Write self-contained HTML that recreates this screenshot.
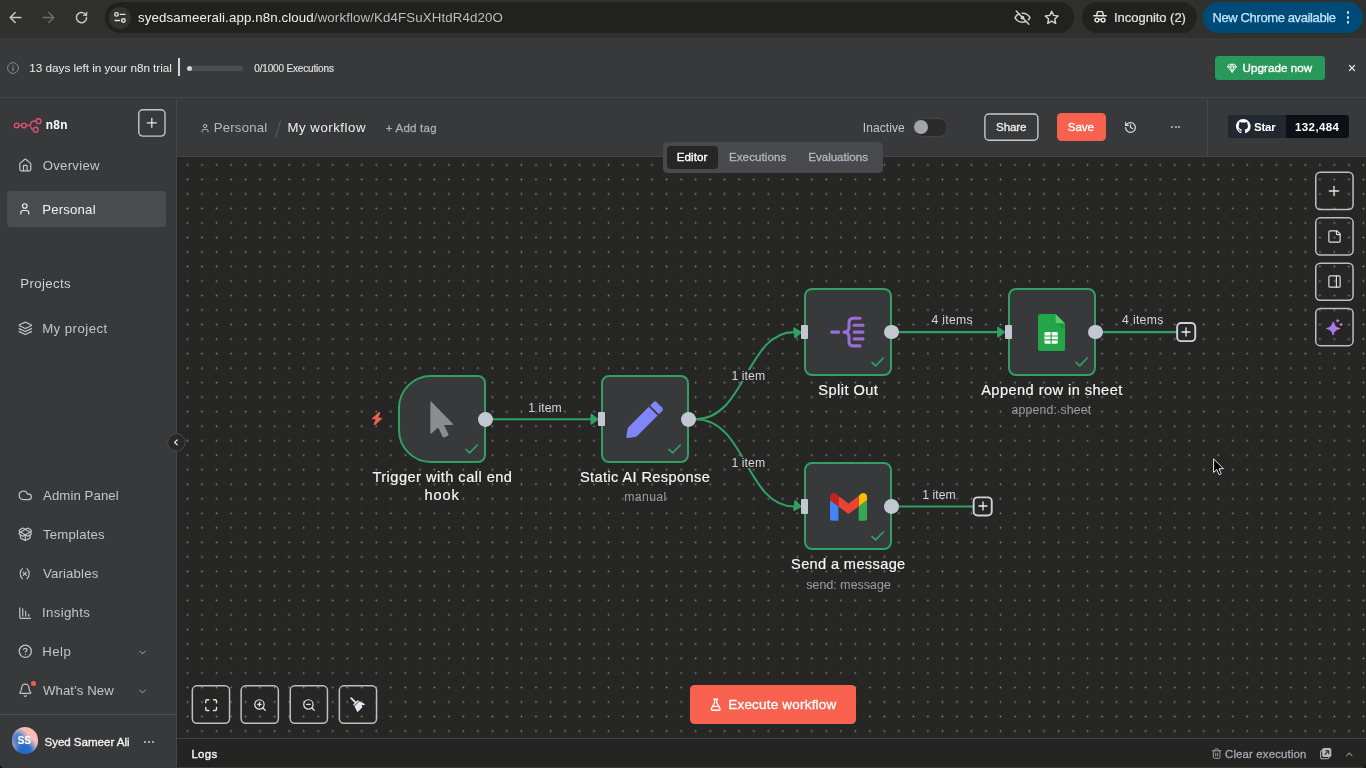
<!DOCTYPE html>
<html lang="en">
<head>
<meta charset="utf-8">
<title>n8n - My workflow</title>
<style>
*{box-sizing:border-box;margin:0;padding:0}
html,body{width:1366px;height:768px;overflow:hidden;background:#262626;font-family:"Liberation Sans",sans-serif;color:#e6e6e6}
.a{position:absolute}
.t{position:absolute;white-space:nowrap;line-height:1}
#root{position:absolute;left:0;top:0;width:1366px;height:768px;will-change:transform}
svg{position:absolute;overflow:visible}
.i{fill:none;stroke-linecap:round;stroke-linejoin:round}
.pill{position:absolute;top:2px;height:31px;border-radius:15.5px;background:#21211f}
.btn{position:absolute;border:1.6px solid #bcbec3;border-radius:4.500px}
.node{position:absolute;width:88px;height:88px;border:2px solid #31a062;border-radius:8px;background:#38393b}
.hin{position:absolute;width:7.4px;height:14.6px;border-radius:1px;background:#c3c7d2}
.hout{position:absolute;width:14.8px;height:14.8px;border-radius:50%;background:#c3c7d2}
.plus{position:absolute;width:20px;height:20px;border:2px solid #ccd0d8;border-radius:4.5px;background:#262626}
.lb{position:absolute;background:#262626}
</style>
</head>
<body>
<div id="root">
<div class="a" style="left:0;top:0;width:1366px;height:38px;background:#30302e"></div>
<svg class="i" style="left:9px;top:11px" width="13" height="13" viewBox="0 0 13 13" stroke="#c7c7c7" stroke-width="1.5"><path d="M12 6.500H1.300M6.200 1.500l-5 5 5 5"/></svg>
<svg class="i" style="left:42px;top:11px" width="13" height="13" viewBox="0 0 13 13" stroke="#6c6c6c" stroke-width="1.5"><path d="M1 6.500h10.700M6.800 1.500l5 5-5 5"/></svg>
<svg class="i" style="left:75px;top:11px" width="13" height="13" viewBox="0 0 13 13" stroke="#c7c7c7" stroke-width="1.5"><path d="M11.600 6.500a5.100 5.100 0 1 1-1.600-3.700"/><path d="M11.800 1v3.400H8.400" fill="#c7c7c7" stroke-width="1"/></svg>
<div class="pill" style="left:105px;width:969px"></div>
<div class="a" style="left:109.200px;top:7.200px;width:21.600px;height:21.600px;border-radius:50%;background:#333331"></div>
<svg class="i" style="left:0;top:0" width="200" height="38" viewBox="0 0 200 38" stroke="#e0e0e0" stroke-width="1.400"><circle cx="116.500" cy="14.400" r="1.750"/><path d="M120.400 14.400H125"/><path d="M115 20.450H119.600"/><circle cx="123.400" cy="20.450" r="1.750"/></svg>
<div class="t" style="left:138.02px;top:11px;font-size:13.3px;letter-spacing:0.106px;color:#f0f0f0">syedsameerali.app.n8n.cloud<span style="color:#bdbdbd">/workflow/Kd4FSuXHtdR4d20O</span></div>
<svg class="i" style="left:1014.400px;top:9.800px" width="17" height="15" viewBox="0 0 17 15" stroke="#cfcfcf" stroke-width="1.500"><path d="M1 7.700C2.500 4.900 5.300 3.200 8.500 3.200s6 1.700 7.500 4.500c-1.500 2.800-4.300 4.500-7.500 4.500S2.500 10.500 1 7.700z"/><path d="M3.300 0l12.500 13.300" stroke="#21211f" stroke-width="1.600"/><circle cx="8.500" cy="7.700" r="1.900" fill="#cfcfcf" stroke="none"/><path d="M2.300 1l12.500 13.300"/></svg>
<svg class="i" style="left:1044.100px;top:10.200px" width="15.400" height="15.400" viewBox="0 0 14 14" stroke="#cfcfcf" stroke-width="1.350"><path d="M7 1.200l1.750 3.700 4.050.5-3 2.800.8 4L7 10.200l-3.600 2 .8-4-3-2.800 4.050-.5z"/></svg>
<div class="pill" style="left:1082px;width:115px"></div>
<svg class="i" style="left:1093px;top:10.400px" width="14" height="13.500" viewBox="0 0 14 13.500" stroke="#e6e6e6" stroke-width="1.450"><path d="M.8 5.800h12.400"/><path d="M3.500 5.600l1.100-4h4.800l1.100 4"/><circle cx="3.900" cy="10" r="1.900"/><circle cx="10.100" cy="10" r="1.900"/><path d="M5.800 9.600c.8-.5 1.600-.5 2.400 0"/></svg>
<div class="t" style="left:1114.0px;top:11px;font-size:13px;letter-spacing:-0.026px;color:#e3e3e3;-webkit-text-stroke:0.2px #e3e3e3">Incognito (2)</div>
<div class="pill" style="left:1202.500px;width:160.500px;background:#004a77"></div>
<div class="t" style="left:1212.51px;top:11px;font-size:13px;letter-spacing:-0.384px;color:#c2e7ff;-webkit-text-stroke:0.25px #c2e7ff">New Chrome available</div>
<div class="a" style="left:1346.500px;top:11.200px;width:2.800px;height:2.800px;border-radius:50%;background:#c2e7ff;box-shadow:0 4.900px 0 #c2e7ff,0 9.800px 0 #c2e7ff"></div>
<div class="a" style="left:0;top:38px;width:1366px;height:60px;background:#38393b;border-bottom:1px solid #444648"></div>
<svg class="i" style="left:6.900px;top:61.500px" width="12" height="12" viewBox="0 0 12 12" stroke="#85878c" stroke-width="1"><circle cx="6" cy="6" r="5.400"/><path d="M6 5.600V8.600" stroke-width="1.300"/><path d="M6 3.500V3.600" stroke-width="1.400"/></svg>
<div class="t" style="left:29.35px;top:63px;font-size:11.8px;letter-spacing:-0.059px;color:#ececec">13 days left in your n8n trial</div>
<div class="a" style="left:177.800px;top:58.200px;width:2.300px;height:17.500px;background:#d6d6d6"></div>
<div class="a" style="left:186.500px;top:66.100px;width:56.600px;height:4.700px;border-radius:2.400px;background:#4d4e52"></div>
<div class="a" style="left:186.500px;top:65.900px;width:5.200px;height:5.200px;border-radius:50%;background:#cbd2e2"></div>
<div class="t" style="left:254.34px;top:64px;font-size:10px;letter-spacing:-0.17px;color:#e0e0e0;-webkit-text-stroke:0.15px #e0e0e0">0/1000 Executions</div>
<div class="a" style="left:1215px;top:56.300px;width:109.800px;height:23.700px;border-radius:3.500px;background:#29995b"></div>
<svg class="i" style="left:1227px;top:63.4px" width="10.2" height="10.2" viewBox="0 0 24 24" stroke="#fff" stroke-width="2.2" ><path d="M6 3h12l4 6-10 13L2 9Z"/><path d="M11 3 8 9l4 13 4-13-3-6"/><path d="M2 9h20"/></svg>
<div class="t" style="left:1242.61px;top:62px;font-size:11.6px;letter-spacing:0.05px;color:#fff;-webkit-text-stroke:0.35px #fff">Upgrade now</div>
<svg class="i" style="left:1346.7px;top:63.4px" width="10" height="10" viewBox="0 0 24 24" stroke="#e4e4e4" stroke-width="2.9" ><path d="M18 6 6 18"/><path d="m6 6 12 12"/></svg>
<div class="a" style="left:0;top:98px;width:177px;height:670px;background:#38393b;border-right:1px solid #444648"></div>
<svg class="i" style="left:0;top:0" width="180" height="140" viewBox="0 0 180 140" stroke="#de4f72" stroke-width="1.350"><circle cx="16.700" cy="125.400" r="2.350"/><circle cx="24" cy="125.400" r="2.350"/><path d="M19.050 125.400H21.650M26.350 125.400H29.200"/><path d="M29 125.400C30.600 125.400 30.700 124.200 31 123.100C31.300 121.900 32 121.200 33.400 121.200H36.100"/><path d="M29 125.400C30.600 125.400 30.700 126.600 31.100 127.700C31.500 128.900 32.100 129.700 33.300 129.700"/><circle cx="38.550" cy="121.200" r="2.450"/><circle cx="35.750" cy="129.700" r="2.450"/></svg>
<div class="t" style="left:45.78px;top:120px;font-size:11.9px;letter-spacing:0.329px;color:#ffffff;font-weight:700">n8n</div>
<svg style="left:0;top:0" width="1366" height="768" viewBox="0 0 1366 768"><rect x="138.80" y="109.80" width="26.20" height="26.30" rx="4" fill="none" stroke="#c4c6ca" stroke-width="1.4"/></svg>
<svg class="i" style="left:144.2px;top:115.2px" width="15.6" height="15.6" viewBox="0 0 24 24" stroke="#e6e6e6" stroke-width="1.9" ><path d="M5 12h14"/><path d="M12 5v14"/></svg>
<svg class="i" style="left:17.7px;top:157.9px" width="14.6" height="14.6" viewBox="0 0 24 24" stroke="#c3c5ca" stroke-width="2" ><path d="M15 21v-8a1 1 0 0 0-1-1h-4a1 1 0 0 0-1 1v8"/><path d="M3 10a2 2 0 0 1 .709-1.528l7-5.999a2 2 0 0 1 2.582 0l7 5.999A2 2 0 0 1 21 10v9a2 2 0 0 1-2 2H5a2 2 0 0 1-2-2z"/></svg>
<div class="t" style="left:42.7px;top:159px;font-size:13.2px;letter-spacing:0.266px;color:#c3c5ca">Overview</div>
<div class="a" style="left:6.800px;top:190.800px;width:158.800px;height:36.500px;border-radius:4px;background:#4b4c4f"></div>
<svg class="i" style="left:18.1px;top:202.1px" width="13.6" height="13.6" viewBox="0 0 24 24" stroke="#f2f2f2" stroke-width="2" ><path d="M19 21v-2a4 4 0 0 0-4-4H9a4 4 0 0 0-4 4v2"/><circle cx="12" cy="7" r="4"/></svg>
<div class="t" style="left:42.15px;top:203px;font-size:13.2px;letter-spacing:0.2px;color:#f2f2f2">Personal</div>
<div class="t" style="left:20.35px;top:277px;font-size:13.2px;letter-spacing:0.372px;color:#cfd1d5">Projects</div>
<svg class="i" style="left:17.7px;top:321.0px" width="14.6" height="14.6" viewBox="0 0 24 24" stroke="#c3c5ca" stroke-width="2" ><path d="M12.83 2.18a2 2 0 0 0-1.66 0L2.6 6.08a1 1 0 0 0 0 1.83l8.58 3.91a2 2 0 0 0 1.66 0l8.58-3.9a1 1 0 0 0 0-1.83z"/><path d="M2 12a1 1 0 0 0 .58.91l8.6 3.91a2 2 0 0 0 1.65 0l8.58-3.9A1 1 0 0 0 22 12"/><path d="M2 17a1 1 0 0 0 .58.91l8.6 3.91a2 2 0 0 0 1.65 0l8.58-3.9A1 1 0 0 0 22 17"/></svg>
<div class="t" style="left:42.15px;top:322px;font-size:13.2px;letter-spacing:0.476px;color:#c3c5ca">My project</div>
<svg class="i" style="left:17.7px;top:488.4px" width="14.6" height="14.6" viewBox="0 0 24 24" stroke="#c3c5ca" stroke-width="2" ><path d="M17.5 19H9a7 7 0 1 1 6.71-9h1.79a4.5 4.5 0 1 1 0 9Z"/></svg>
<div class="t" style="left:43.04px;top:489px;font-size:13.2px;letter-spacing:0.085px;color:#c3c5ca">Admin Panel</div>
<svg class="i" style="left:17.7px;top:527.4px" width="14.6" height="14.6" viewBox="0 0 24 24" stroke="#c3c5ca" stroke-width="2" ><path d="M12 22v-9"/><path d="M15.17 2.21a1.67 1.67 0 0 1 1.63 0L21 4.57a1.93 1.93 0 0 1 0 3.36L8.82 14.79a1.655 1.655 0 0 1-1.64 0L3 12.43a1.93 1.93 0 0 1 0-3.36z"/><path d="M20 13v3.870a2.06 2.06 0 0 1-1.11 1.83l-6 3.08a1.93 1.93 0 0 1-1.78 0l-6-3.08A2.06 2.06 0 0 1 4 16.870V13"/><path d="M21 12.43a1.93 1.93 0 0 0 0-3.36L8.83 2.2a1.64 1.64 0 0 0-1.63 0L3 4.57a1.93 1.93 0 0 0 0 3.36l12.18 6.86a1.636 1.636 0 0 0 1.63 0z"/></svg>
<div class="t" style="left:43.01px;top:528px;font-size:13.2px;letter-spacing:0.191px;color:#c3c5ca">Templates</div>
<svg class="i" style="left:18px;top:566.8999999999999px" width="13.4" height="13.4" viewBox="0 0 24 24" stroke="#c3c5ca" stroke-width="2" ><path d="M8 21s-4-3-4-9 4-9 4-9"/><path d="M16 3s4 3 4 9-4 9-4 9"/><path d="M15 9l-6 6"/><path d="M9 9l6 6"/></svg>
<div class="t" style="left:43.02px;top:567px;font-size:13.2px;letter-spacing:0.152px;color:#c3c5ca">Variables</div>
<svg class="i" style="left:17.6px;top:605.4999999999999px" width="14.2" height="14.2" viewBox="0 0 24 24" stroke="#c3c5ca" stroke-width="2" ><path d="M13 17V9"/><path d="M18 17v-3"/><path d="M3 3v16a2 2 0 0 0 2 2h16"/><path d="M8 17V5"/></svg>
<div class="t" style="left:42.05px;top:606px;font-size:13.2px;letter-spacing:0.332px;color:#c3c5ca">Insights</div>
<svg class="i" style="left:17.7px;top:644.2px" width="14.6" height="14.6" viewBox="0 0 24 24" stroke="#c3c5ca" stroke-width="2" ><circle cx="12" cy="12" r="10"/><path d="M9.09 9a3 3 0 0 1 5.83 1c0 2-3 3-3 3"/><path d="M12 17h.01"/></svg>
<div class="t" style="left:42.15px;top:645px;font-size:13.2px;letter-spacing:0.537px;color:#c3c5ca">Help</div>
<svg class="i" style="left:17.7px;top:683.2px" width="14.6" height="14.6" viewBox="0 0 24 24" stroke="#c3c5ca" stroke-width="2" ><path d="M10.268 21a2 2 0 0 0 3.464 0"/><path d="M3.262 15.326A1 1 0 0 0 4 17h16a1 1 0 0 0 .74-1.673C19.41 13.956 18 12.499 18 8A6 6 0 0 0 6 8c0 4.499-1.411 5.956-2.738 7.326"/></svg>
<div class="t" style="left:43.05px;top:684px;font-size:13.2px;letter-spacing:0.067px;color:#c3c5ca">What&#8217;s New</div>
<div class="a" style="left:30.700px;top:681.400px;width:5px;height:5px;border-radius:50%;background:#f0604d"></div>
<svg class="i" style="left:136.5px;top:646.5px" width="11" height="11" viewBox="0 0 24 24" stroke="#b4b6bb" stroke-width="2" ><path d="m6 9 6 6 6-6"/></svg>
<svg class="i" style="left:136.5px;top:685.5px" width="11" height="11" viewBox="0 0 24 24" stroke="#b4b6bb" stroke-width="2" ><path d="m6 9 6 6 6-6"/></svg>
<div class="a" style="left:0;top:714px;width:176px;height:1px;background:#4a4b4e"></div>
<div class="a" style="left:11.800px;top:727.400px;width:26.300px;height:26.300px;border-radius:50%;background:radial-gradient(circle at 48% 88%,#2468c8 0%,#2c6dc9 22%,rgba(60,118,204,0) 52%),radial-gradient(circle at 22% 42%,#3f78cc 0%,rgba(80,130,205,0.850) 18%,rgba(120,150,210,0) 42%),radial-gradient(circle at 62% 18%,#f9bdb3 0%,#f5bfba 40%,#e9c3cb 70%,#e8d3df 100%)"></div>
<div class="t" style="left:17.56px;top:736px;font-size:10.4px;letter-spacing:-0.196px;color:#fff;font-weight:700">SS</div>
<div class="t" style="left:44.44px;top:736px;font-size:11.6px;letter-spacing:-0.044px;color:#f2f2f2;-webkit-text-stroke:0.35px #f2f2f2">Syed Sameer Ali</div>
<div class="a" style="left:144.25px;top:740.7px;width:2px;height:2px;border-radius:50%;background:#c9cbcf"></div><div class="a" style="left:148.05px;top:740.7px;width:2px;height:2px;border-radius:50%;background:#c9cbcf"></div><div class="a" style="left:151.85000000000002px;top:740.7px;width:2px;height:2px;border-radius:50%;background:#c9cbcf"></div>
<div class="a" style="left:177px;top:98px;width:1189px;height:59.400px;background:#38393b;border-bottom:1.400px solid #444648"></div>
<svg class="i" style="left:200.2px;top:122.6px" width="10.2" height="10.2" viewBox="0 0 24 24" stroke="#b5b8be" stroke-width="2.3" ><path d="M19 21v-2a4 4 0 0 0-4-4H9a4 4 0 0 0-4 4v2"/><circle cx="12" cy="7" r="4"/></svg>
<div class="t" style="left:213.65px;top:121px;font-size:13.2px;letter-spacing:0.228px;color:#b5b8be">Personal</div>
<svg class="i" style="left:275px;top:120.500px" width="6" height="16.500" viewBox="0 0 6 16.500" stroke="#57585c" stroke-width="1.200"><path d="M5.400.3L.6 16.200"/></svg>
<div class="t" style="left:287.45px;top:121px;font-size:13.2px;letter-spacing:0.548px;color:#f0f0f0">My workflow</div>
<div class="t" style="left:385.7px;top:123px;font-size:11.5px;letter-spacing:0.249px;color:#a9acb2;-webkit-text-stroke:0.3px #a9acb2">+ Add tag</div>
<div class="t" style="left:862.69px;top:122px;font-size:12px;letter-spacing:0.104px;color:#c5c7cb">Inactive</div>
<div class="a" style="left:912.500px;top:118px;width:35.500px;height:18.500px;border-radius:9.250px;background:#2b2b2c;border:1px solid #444548"></div>
<div class="a" style="left:914px;top:120.100px;width:14.400px;height:14.400px;border-radius:50%;background:#a4a5a9"></div>
<svg style="left:0;top:0" width="1366" height="768" viewBox="0 0 1366 768"><rect x="984.90" y="114.00" width="53.00" height="26.30" rx="4" fill="none" stroke="#c5c7cc" stroke-width="1.4"/></svg>
<div class="t" style="left:996.04px;top:121px;font-size:11.6px;letter-spacing:-0.116px;color:#ececec;-webkit-text-stroke:0.35px #ececec">Share</div>
<div class="a" style="left:1057px;top:113.300px;width:48.800px;height:27.700px;border-radius:4.500px;background:#f7614d"></div>
<div class="t" style="left:1067.84px;top:121px;font-size:11.6px;letter-spacing:-0.093px;color:#fff;-webkit-text-stroke:0.35px #fff">Save</div>
<svg class="i" style="left:1123.7px;top:120.8px" width="13" height="13" viewBox="0 0 24 24" stroke="#dcdde0" stroke-width="2.2" ><path d="M3 12a9 9 0 1 0 9-9 9.750 9.750 0 0 0-6.740 2.740L3 8"/><path d="M3 3v5h5"/><path d="M12 7v5l4 2"/></svg>
<div class="a" style="left:1170.6499999999999px;top:126.3px;width:2px;height:2px;border-radius:50%;background:#b9bbc0"></div><div class="a" style="left:1174.55px;top:126.3px;width:2px;height:2px;border-radius:50%;background:#b9bbc0"></div><div class="a" style="left:1178.45px;top:126.3px;width:2px;height:2px;border-radius:50%;background:#b9bbc0"></div>
<div class="a" style="left:1206.500px;top:98px;width:1.200px;height:58.500px;background:#444648"></div>
<div class="a" style="left:1227.600px;top:115px;width:58.400px;height:23px;border-radius:3px 0 0 3px;background:#212830"></div>
<div class="a" style="left:1286px;top:115px;width:62.900px;height:23px;border-radius:0 3px 3px 0;background:#0d1117"></div>
<svg style="left:1236.300px;top:119px" width="14.600" height="14.600" viewBox="0 0 16 16" fill="#fff"><path d="M8 0C3.580 0 0 3.580 0 8c0 3.540 2.290 6.530 5.470 7.590.400.070.550-.170.550-.380 0-.190-.010-.820-.010-1.490-2.010.370-2.530-.490-2.690-.940-.090-.230-.480-.940-.820-1.130-.280-.150-.680-.520-.010-.530.630-.010 1.080.580 1.230.820.720 1.210 1.870.870 2.330.660.070-.520.280-.870.510-1.070-1.780-.200-3.640-.890-3.640-3.950 0-.870.310-1.590.820-2.150-.080-.200-.360-1.020.080-2.120 0 0 .670-.210 2.200.820.640-.180 1.320-.270 2-.270s1.360.090 2 .270c1.530-1.040 2.200-.820 2.200-.820.440 1.100.160 1.920.080 2.120.510.560.820 1.270.820 2.150 0 3.070-1.870 3.750-3.650 3.950.290.250.540.730.540 1.480 0 1.070-.010 1.930-.010 2.200 0 .210.150.460.550.380A8.013 8.013 0 0 0 16 8c0-4.420-3.580-8-8-8z"/></svg>
<div class="t" style="left:1253.9px;top:122px;font-size:11.5px;letter-spacing:-0.183px;color:#fff;font-weight:700">Star</div>
<div class="t" style="left:1295.03px;top:122px;font-size:11.5px;letter-spacing:0.395px;color:#fff;font-weight:700">132,484</div>
<svg style="left:177.500px;top:157.600px" width="1188.500" height="581" viewBox="177.500 157.600 1188.500 581"><defs><pattern id="dots" x="179.8015" y="157.2415" width="14.517" height="14.517" patternUnits="userSpaceOnUse"><circle cx="7.2585" cy="7.2585" r="0.850" fill="#828282"/></pattern></defs><rect x="177.500" y="157.600" width="1188.500" height="581" fill="#262625"/><rect x="177.500" y="157.600" width="1188.500" height="581" fill="url(#dots)"/></svg>
<svg class="i" style="left:0;top:0" width="1366" height="768" viewBox="0 0 1366 768" stroke="#31a062" stroke-width="2.050"><path d="M492 419.2H592"/><path d="M695.500 419.2C746 419.2 746 332.1 794 332.1"/><path d="M695.500 419.2C746 419.2 746 506.4 794 506.4"/><path d="M899 332.1H999"/><path d="M1102 332.1H1177"/><path d="M899 506.4H973"/><path transform="translate(598.2 419.2) rotate(0)" d="M0 0L-6.600 -5.100Q-7.300 -5.500 -7.300 -4.600L-7.300 4.600Q-7.300 5.500 -6.600 5.100Z" fill="#31a062" stroke="#31a062" stroke-width="0.800" stroke-linejoin="round"/><path transform="translate(801.4 332.1) rotate(-7)" d="M0 0L-6.600 -5.100Q-7.300 -5.500 -7.300 -4.600L-7.300 4.600Q-7.300 5.500 -6.600 5.100Z" fill="#31a062" stroke="#31a062" stroke-width="0.800" stroke-linejoin="round"/><path transform="translate(801.4 506.4) rotate(7)" d="M0 0L-6.600 -5.100Q-7.300 -5.500 -7.300 -4.600L-7.300 4.600Q-7.300 5.500 -6.600 5.100Z" fill="#31a062" stroke="#31a062" stroke-width="0.800" stroke-linejoin="round"/><path transform="translate(1004.8 332.1) rotate(0)" d="M0 0L-6.600 -5.100Q-7.300 -5.500 -7.300 -4.600L-7.300 4.600Q-7.300 5.500 -6.600 5.100Z" fill="#31a062" stroke="#31a062" stroke-width="0.800" stroke-linejoin="round"/></svg>
<div class="node" style="left:398px;top:375.2px;border-radius:33px 8px 8px 33px"></div>
<svg class="i" style="left:464.8px;top:444.0px" width="13.300" height="9.800" viewBox="0 0 13.300 9.800" stroke="#31a062" stroke-width="1.700"><path d="M1 5.300L4.600 8.800 12.300 1" /></svg>
<div class="hout" style="left:478.0px;top:411.8px"></div>
<div class="node" style="left:601.3px;top:375.2px;"></div>
<svg class="i" style="left:668.0999999999999px;top:444.0px" width="13.300" height="9.800" viewBox="0 0 13.300 9.800" stroke="#31a062" stroke-width="1.700"><path d="M1 5.300L4.600 8.800 12.300 1" /></svg>
<div class="hin" style="left:597.9px;top:411.9px"></div>
<div class="hout" style="left:681.3px;top:411.8px"></div>
<div class="node" style="left:804.4px;top:288.1px;"></div>
<svg class="i" style="left:871.1999999999999px;top:356.90000000000003px" width="13.300" height="9.800" viewBox="0 0 13.300 9.800" stroke="#31a062" stroke-width="1.700"><path d="M1 5.300L4.600 8.800 12.300 1" /></svg>
<div class="hin" style="left:801.0px;top:324.8px"></div>
<div class="hout" style="left:884.4px;top:324.70000000000005px"></div>
<div class="node" style="left:1008px;top:288.1px;"></div>
<svg class="i" style="left:1074.8px;top:356.90000000000003px" width="13.300" height="9.800" viewBox="0 0 13.300 9.800" stroke="#31a062" stroke-width="1.700"><path d="M1 5.300L4.600 8.800 12.300 1" /></svg>
<div class="hin" style="left:1004.6px;top:324.8px"></div>
<div class="hout" style="left:1088.0px;top:324.70000000000005px"></div>
<div class="node" style="left:804.4px;top:462.4px;"></div>
<svg class="i" style="left:871.1999999999999px;top:531.1999999999999px" width="13.300" height="9.800" viewBox="0 0 13.300 9.800" stroke="#31a062" stroke-width="1.700"><path d="M1 5.300L4.600 8.800 12.300 1" /></svg>
<div class="hin" style="left:801.0px;top:499.09999999999997px"></div>
<div class="hout" style="left:884.4px;top:499.0px"></div>
<svg style="left:370.600px;top:411.700px" width="11.900" height="13.100" viewBox="0 0 448 512" fill="#f0604d"><path d="M349.400 44.600c5.900-13.700 1.500-29.700-10.600-38.500s-28.700-8-39.900 1.800l-256 224c-10 8.800-13.600 22.900-8.900 35.300S50.700 288 64 288H175.500L98.600 467.400c-5.900 13.700-1.500 29.700 10.600 38.500s28.700 8 39.900-1.800l256-224c10-8.800 13.600-22.900 8.900-35.300s-16.600-20.700-30-20.700H272.500L349.400 44.600z"/></svg>
<svg style="left:0;top:0" width="1366" height="768" viewBox="0 0 1366 768"><path d="M431.200 401.600Q430.300 400.800 430.300 402V432.600Q430.300 434.300 431.600 433.200L438.100 427.600L442.600 436.800Q443.200 437.900 444.300 437.400L447.800 435.700Q448.900 435.100 448.400 434L444 425H452Q453.800 424.900 452.600 423.500Z" fill="#8a8c90"/></svg>
<svg style="left:0;top:0" width="1366" height="768" viewBox="0 0 1366 768"><g transform="translate(643.100 421.300) rotate(45)" fill="#8085f8"><path d="M-6.200 -20.900Q-6.200 -23.150 -3.950 -23.150H3.950Q6.200 -23.150 6.200 -20.900V-16.100H-6.200Z"/><path d="M-6.200 -14.300H6.200V14.600Q6.200 15.400 5.800 16L1.300 22.400Q0 23.900 -1.300 22.400L-5.800 16Q-6.200 15.400 -6.200 14.600Z"/></g></svg>
<svg class="i" style="left:0;top:0" width="1366" height="768" viewBox="0 0 1366 768" stroke="#9b6dd8" stroke-width="3.100"><path d="M831.700 332.100H838.700"/><path d="M860 318.300H853.500Q849 318.300 849 322.800V327.600Q849 332.100 844 332.100Q849 332.100 849 336.600V341.400Q849 345.900 853.500 345.900H860"/><path d="M854.100 325.300H863"/><path d="M854.100 332.100H863"/><path d="M854.100 338.900H863"/></svg>
<svg style="left:1038.200px;top:313.600px" width="27.100" height="37" viewBox="0 0 27.100 37"><path d="M2.600 0H17.600L27.100 9.500V34.400Q27.100 37 24.500 37H2.600Q0 37 0 34.400V2.600Q0 0 2.600 0Z" fill="#23a647"/><path d="M17.600 0L27.100 9.500H20.200Q17.600 9.500 17.600 6.900Z" fill="#5bc86f"/><path d="M17.600 9.500H27.100V15.500Z" fill="#1c8a3a" opacity="0.550"/><rect x="6.500" y="18.100" width="13.300" height="11.700" rx="1.300" fill="#fff"/><g stroke="#23a647" stroke-width="1.200"><path d="M13.150 18.100V29.800"/><path d="M6.500 22H19.800M6.500 25.900H19.800"/></g></svg>
<svg style="left:829.900px;top:492.500px" width="37.100" height="27.700" viewBox="0 0 37.100 27.700"><path d="M2.500 27.700H8.400V13.400L0 7.100V25.200Q0 27.700 2.500 27.700Z" fill="#4285f4"/><path d="M28.700 27.700H34.600Q37.100 27.700 37.100 25.200V7.100L28.700 13.400Z" fill="#34a853"/><path d="M28.700 2.900V13.400L37.100 7.100V3.700C37.100 0.600 33.500 -1.200 31 0.700Z" fill="#fbbc04"/><path d="M8.400 13.400V2.900L18.550 10.500L28.700 2.900V13.400L18.550 21Z" fill="#ea4335"/><path d="M0 3.700V7.100L8.400 13.400V2.900L6.100 0.700C3.600 -1.200 0 0.600 0 3.700Z" fill="#c5221f"/></svg>
<svg style="left:0;top:0" width="1366" height="768" viewBox="0 0 1366 768"><rect x="1177.15" y="323.05" width="18.10" height="18.10" rx="4" fill="#262625" stroke="#cdd1d9" stroke-width="1.9"/></svg>
<svg class="i" style="left:1182.2px;top:328.1px" width="8" height="8" viewBox="0 0 8 8" stroke="#f0f0f0" stroke-width="1.300"><path d="M0 4H8M4 0V8"/></svg>
<svg style="left:0;top:0" width="1366" height="768" viewBox="0 0 1366 768"><rect x="973.65" y="497.35" width="18.10" height="18.10" rx="4" fill="#262625" stroke="#cdd1d9" stroke-width="1.9"/></svg>
<svg class="i" style="left:978.7px;top:502.4px" width="8" height="8" viewBox="0 0 8 8" stroke="#f0f0f0" stroke-width="1.300"><path d="M0 4H8M4 0V8"/></svg>
<div class="t" style="left:372.45px;top:470px;font-size:14.6px;letter-spacing:0.475px;color:#f5f5f5;-webkit-text-stroke:0.2px #f5f5f5">Trigger with call end</div>
<div class="t" style="left:424.61px;top:488px;font-size:14.6px;letter-spacing:0.82px;color:#f5f5f5;-webkit-text-stroke:0.2px #f5f5f5">hook</div>
<div class="t" style="left:579.96px;top:470px;font-size:14.6px;letter-spacing:0.389px;color:#f5f5f5;-webkit-text-stroke:0.2px #f5f5f5">Static AI Response</div>
<div class="t" style="left:624.16px;top:491px;font-size:12.3px;letter-spacing:0.362px;color:#9b9da1">manual</div>
<div class="t" style="left:818.26px;top:383px;font-size:14.6px;letter-spacing:0.456px;color:#f5f5f5;-webkit-text-stroke:0.2px #f5f5f5">Split Out</div>
<div class="t" style="left:981.2px;top:383px;font-size:14.6px;letter-spacing:0.445px;color:#f5f5f5;-webkit-text-stroke:0.2px #f5f5f5">Append row in sheet</div>
<div class="t" style="left:1011.47px;top:404px;font-size:12.3px;letter-spacing:0.147px;color:#9b9da1">append: sheet</div>
<div class="t" style="left:791.06px;top:557px;font-size:14.6px;letter-spacing:0.358px;color:#f5f5f5;-webkit-text-stroke:0.2px #f5f5f5">Send a message</div>
<div class="t" style="left:806.37px;top:579px;font-size:12.3px;letter-spacing:0.083px;color:#9b9da1">send: message</div>
<div class="t" style="left:528.33px;top:402px;font-size:12.2px;letter-spacing:0.047px;color:#d5d6d9">1 item</div>
<div class="lb" style="left:731.500px;top:369.800px;width:34px;height:11.400px"></div>
<div class="t" style="left:731.53px;top:370px;font-size:12.2px;letter-spacing:0.077px;color:#d5d6d9">1 item</div>
<div class="lb" style="left:731.500px;top:456.900px;width:34px;height:11.400px"></div>
<div class="t" style="left:731.53px;top:457px;font-size:12.2px;letter-spacing:0.077px;color:#d5d6d9">1 item</div>
<div class="t" style="left:931.51px;top:314px;font-size:12.2px;letter-spacing:0.31px;color:#d5d6d9">4 items</div>
<div class="t" style="left:1122.11px;top:314px;font-size:12.2px;letter-spacing:0.31px;color:#d5d6d9">4 items</div>
<div class="t" style="left:922.13px;top:489px;font-size:12.2px;letter-spacing:0.077px;color:#d5d6d9">1 item</div>
<div class="a" style="left:662.800px;top:142px;width:220px;height:30.500px;border-radius:4.500px;background:#48494c"></div>
<div class="a" style="left:666.500px;top:145.600px;width:51.800px;height:23.300px;border-radius:4px;background:#262626"></div>
<div class="t" style="left:676.84px;top:151px;font-size:11.6px;letter-spacing:0.039px;color:#ffffff;-webkit-text-stroke:0.35px #ffffff">Editor</div>
<div class="t" style="left:728.91px;top:151px;font-size:11.6px;letter-spacing:0.085px;color:#b3b6bc;-webkit-text-stroke:0.3px #b3b6bc">Executions</div>
<div class="t" style="left:808.21px;top:151px;font-size:11.6px;letter-spacing:-0.018px;color:#b3b6bc;-webkit-text-stroke:0.3px #b3b6bc">Evaluations</div>
<svg style="left:0;top:0" width="1366" height="768" viewBox="0 0 1366 768"><rect x="1315.75" y="172.25" width="37.30" height="37.20" rx="4.5" fill="none" stroke="#bcbec3" stroke-width="1.5"/></svg>
<svg style="left:0;top:0" width="1366" height="768" viewBox="0 0 1366 768"><rect x="1315.75" y="217.85" width="37.30" height="37.20" rx="4.5" fill="none" stroke="#bcbec3" stroke-width="1.5"/></svg>
<svg style="left:0;top:0" width="1366" height="768" viewBox="0 0 1366 768"><rect x="1315.75" y="263.15" width="37.30" height="37.20" rx="4.5" fill="none" stroke="#bcbec3" stroke-width="1.5"/></svg>
<svg style="left:0;top:0" width="1366" height="768" viewBox="0 0 1366 768"><rect x="1315.75" y="308.45" width="37.30" height="37.20" rx="4.5" fill="none" stroke="#bcbec3" stroke-width="1.5"/></svg>
<svg class="i" style="left:1326.4px;top:183px" width="16" height="16" viewBox="0 0 24 24" stroke="#e6e6e6" stroke-width="1.9" ><path d="M5 12h14"/><path d="M12 5v14"/></svg>
<svg class="i" style="left:1327.2px;top:228.7px" width="15" height="15" viewBox="0 0 24 24" stroke="#dfe0e3" stroke-width="1.9" ><path d="M16 3H5a2 2 0 0 0-2 2v14a2 2 0 0 0 2 2h14a2 2 0 0 0 2-2V8Z"/><path d="M15 3v4a2 2 0 0 0 2 2h4"/></svg>
<svg class="i" style="left:1327.2px;top:274px" width="15" height="15" viewBox="0 0 24 24" stroke="#dfe0e3" stroke-width="1.9" ><rect width="18" height="18" x="3" y="3" rx="2"/><path d="M15 3v18"/></svg>
<svg style="left:0;top:0" width="1366" height="768" viewBox="0 0 1366 768"><defs><linearGradient id="sp" gradientUnits="userSpaceOnUse" x1="-7" y1="1.500" x2="7.500" y2="-1.500"><stop offset="0" stop-color="#8f80f8"/><stop offset="0.450" stop-color="#a877f0"/><stop offset="0.750" stop-color="#c878e6"/><stop offset="1" stop-color="#f083c4"/></linearGradient></defs><path transform="translate(1333.100 328.500)" fill="url(#sp)" stroke="url(#sp)" stroke-width="0.900" stroke-linejoin="round" d="M0 -6.600Q1.100 -1.100 6.700 0Q1.100 1.100 0 6.600Q-1.100 1.100 -6.700 0Q-1.100 -1.100 0 -6.600Z"/><path transform="translate(1337.700 320.800)" fill="#b07ae8" d="M0 -2.300Q0.350 -0.350 2.300 0Q0.350 0.350 0 2.300Q-0.350 0.350 -2.300 0Q-0.350 -0.350 0 -2.300Z"/><path transform="translate(1341.100 324.400)" fill="#dd86c4" d="M0 -1.900Q0.300 -0.300 1.900 0Q0.300 0.300 0 1.900Q-0.300 0.300 -1.900 0Q-0.300 -0.300 0 -1.900Z"/></svg>
<svg style="left:0;top:0" width="1366" height="768" viewBox="0 0 1366 768"><rect x="192.35" y="685.85" width="37.20" height="37.40" rx="4.5" fill="none" stroke="#bcbec3" stroke-width="1.5"/></svg>
<svg style="left:0;top:0" width="1366" height="768" viewBox="0 0 1366 768"><rect x="241.15" y="685.85" width="37.20" height="37.40" rx="4.5" fill="none" stroke="#bcbec3" stroke-width="1.5"/></svg>
<svg style="left:0;top:0" width="1366" height="768" viewBox="0 0 1366 768"><rect x="290.25" y="685.85" width="37.20" height="37.40" rx="4.5" fill="none" stroke="#bcbec3" stroke-width="1.5"/></svg>
<svg style="left:0;top:0" width="1366" height="768" viewBox="0 0 1366 768"><rect x="339.35" y="685.85" width="37.20" height="37.40" rx="4.5" fill="none" stroke="#bcbec3" stroke-width="1.5"/></svg>
<svg class="i" style="left:203.8px;top:697.7px" width="14.3" height="14.3" viewBox="0 0 24 24" stroke="#e3e4e7" stroke-width="2.3" ><path d="M8 3H5a2 2 0 0 0-2 2v3"/><path d="M21 8V5a2 2 0 0 0-2-2h-3"/><path d="M3 16v3a2 2 0 0 0 2 2h3"/><path d="M16 21h3a2 2 0 0 0 2-2v-3"/></svg>
<svg class="i" style="left:252.8px;top:698.2px" width="14" height="14" viewBox="0 0 24 24" stroke="#e3e4e7" stroke-width="2.1" ><circle cx="11" cy="11" r="8"/><path d="M21 21l-4.350-4.350"/><path d="M11 8v6"/><path d="M8 11h6"/></svg>
<svg class="i" style="left:301.9px;top:698.2px" width="14" height="14" viewBox="0 0 24 24" stroke="#e3e4e7" stroke-width="2.1" ><circle cx="11" cy="11" r="8"/><path d="M21 21l-4.350-4.350"/><path d="M8 11h6"/></svg>
<svg style="left:0;top:0" width="1366" height="768" viewBox="0 0 1366 768" fill="#e4e7ef"><g transform="translate(355.500 702.400) rotate(45)"><rect x="-7" y="-0.900" width="7.500" height="1.800" rx="0.900"/><rect x="-0.100" y="-3.500" width="1.500" height="7" rx="0.400"/><path d="M2 -3.500L8.300 -5.600L7.800 -3.700L6.200 -2.800L8.300 -1.200V5.500L2 3.500Z"/></g></svg>
<div class="a" style="left:689.500px;top:685.200px;width:166.500px;height:38.500px;border-radius:4.500px;background:#f9624e"></div>
<svg class="i" style="left:709.2px;top:698px" width="13.4" height="13.4" viewBox="0 0 24 24" stroke="#fff" stroke-width="2.4" ><path d="M14 2v6a2 2 0 0 0 .245.960l5.510 10.080A2 2 0 0 1 18 22H6a2 2 0 0 1-1.755-2.960l5.510-10.080A2 2 0 0 0 10 8V2"/><path d="M6.453 15h11.094"/><path d="M8.500 2h7"/></svg>
<div class="t" style="left:728.26px;top:698px;font-size:13.4px;letter-spacing:0.25px;color:#fff;-webkit-text-stroke:0.35px #fff">Execute workflow</div>
<svg style="left:1212.500px;top:457.800px" width="12" height="18" viewBox="0 0 12 18"><path d="M0.600 0.800V14.400L3.800 11.500L6 16.700L8.200 15.700L6 10.700H10.400Z" fill="#000" stroke="#fff" stroke-width="0.900" stroke-linejoin="miter"/></svg>
<div class="a" style="left:177px;top:738px;width:1189px;height:30px;background:#242423;border-top:1px solid #3f4041"></div>
<div class="t" style="left:191.46px;top:749px;font-size:11.4px;letter-spacing:0.325px;color:#f5f5f5;-webkit-text-stroke:0.35px #f5f5f5">Logs</div>
<svg class="i" style="left:1211.2px;top:748px" width="11.3" height="11.3" viewBox="0 0 24 24" stroke="#9a9da3" stroke-width="2.1" ><path d="M3 6h18"/><path d="M19 6v14c0 1-1 2-2 2H7c-1 0-2-1-2-2V6"/><path d="M8 6V4c0-1 1-2 2-2h4c1 0 2 1 2 2v2"/><path d="M10 11v6"/><path d="M14 11v6"/></svg>
<div class="t" style="left:1224.99px;top:749px;font-size:11.4px;letter-spacing:0.166px;color:#a5a8ae;-webkit-text-stroke:0.3px #a5a8ae">Clear execution</div>
<svg style="left:1319.900px;top:748px" width="11.300" height="11.300" viewBox="0 0 11.300 11.300"><rect x="0.600" y="2.600" width="8.200" height="8.200" rx="1.500" fill="none" stroke="#a9acb3" stroke-width="1.100"/><rect x="2.200" y="0" width="9.100" height="9.100" rx="1.600" fill="#b4b7be"/><path d="M5 6.400L8.500 2.900M5.600 2.700H8.700V5.800" fill="none" stroke="#2a2a2a" stroke-width="1.100" stroke-linecap="round" stroke-linejoin="round"/></svg>
<svg class="i" style="left:1343.9px;top:748.8px" width="10.6" height="10.6" viewBox="0 0 24 24" stroke="#c5c7cb" stroke-width="2.2" ><path d="m18 15-6-6-6 6"/></svg>
<div class="a" style="left:0;top:767px;width:1366px;height:1px;background:#3a3a38"></div>
<svg style="left:0;top:764px" width="4" height="4" viewBox="0 0 4 4"><path d="M0 0V4H4Q0 4 0 0Z" fill="#0c0c0c"/></svg>
<svg style="left:1361px;top:763px" width="5" height="5" viewBox="0 0 5 5"><path d="M5 0V5H0Q5 5 5 0Z" fill="#0c0c0c"/></svg>
<svg style="left:0;top:0" width="1366" height="768" viewBox="0 0 1366 768"><circle cx="176.500" cy="442.400" r="8.800" fill="#282828" stroke="#494b4d" stroke-width="1"/></svg>
<svg class="i" style="left:0;top:0" width="1366" height="768" viewBox="0 0 1366 768" stroke="#e8e8e8" stroke-width="1.300"><path d="M177.100 440L174.600 442.350L177.100 444.700"/></svg>
</div>
</body>
</html>
